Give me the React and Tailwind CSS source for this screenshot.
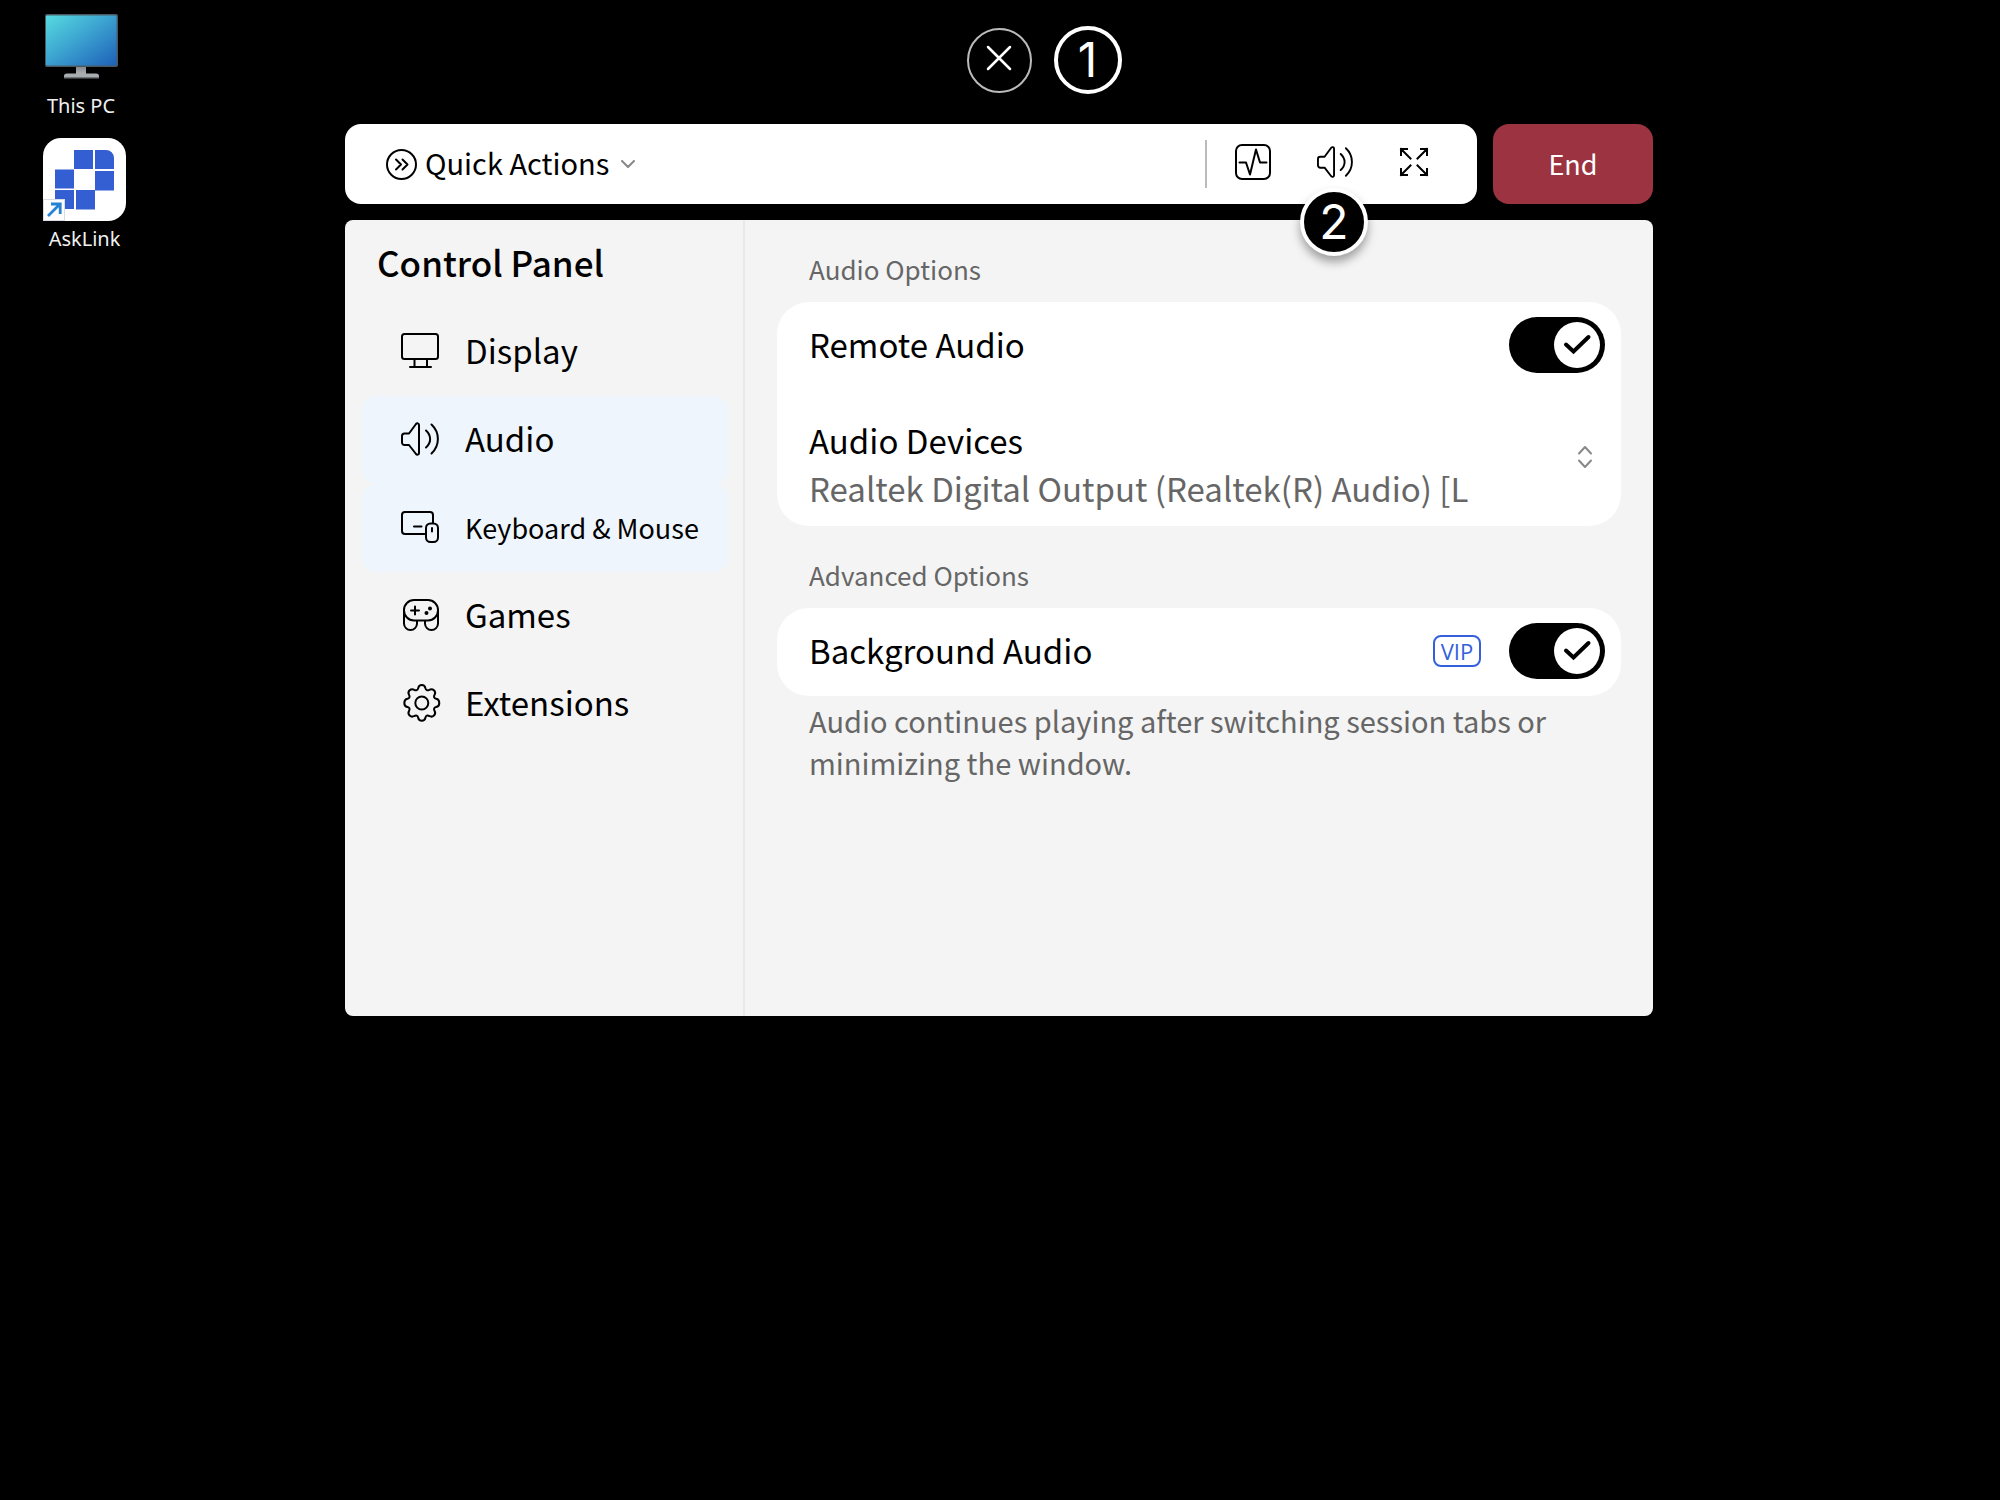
import React, { useState } from "react";

const stroke = {
  fill: "none",
  stroke: "currentColor",
  strokeWidth: 2,
  strokeLinecap: "round",
  strokeLinejoin: "round",
  "aria-hidden": true,
};

function SpeakerIcon({ className }) {
  return (
    <svg viewBox="0 0 38 36" className={className} {...stroke}>
      <path d="M8 12.500H3.500A2.500 2.500 0 0 0 1 15v6.500A2.500 2.500 0 0 0 3.500 24H8l7 9c1 1.200 3 .8 3-1V4c0-1.800-2-2.200-3-1z" />
      <path d="M25 9.500c5.500 5 5.500 12 0 17M30.500 3.500c8.500 8 8.500 21 0 29" />
    </svg>
  );
}

function DisplayIcon({ className }) {
  return (
    <svg viewBox="0 0 38 36" className={className} {...stroke}>
      <rect x="1" y="1" width="36" height="25" rx="2.500" />
      <path d="M13.500 26v8M26 26v8M9 34h21" />
    </svg>
  );
}

function KeyboardIcon({ className }) {
  return (
    <svg viewBox="0 0 38 36" className={className} {...stroke}>
      <path d="M23.500 25H4a3 3 0 0 1-3-3V6a3 3 0 0 1 3-3h25a3 3 0 0 1 3 3v8" />
      <rect x="25" y="14.500" width="12" height="18.500" rx="4.500" />
      <path d="M13 17.500h7.500M31 19v3.500" />
    </svg>
  );
}

function GamesIcon({ className }) {
  return (
    <svg viewBox="0 0 38 36" className={className} {...stroke}>
      <rect x="3" y="3" width="34" height="20.500" rx="10" />
      <path d="M3 13v13.500a6.500 6.500 0 0 0 13 0V24M37 13v13.500a6.500 6.500 0 0 1-13 0V24" />
      <path d="M10 13.500h8M14 9.500v8" />
      <circle cx="29" cy="11.500" r="1" fill="currentColor" />
      <circle cx="25.500" cy="16" r="1" fill="currentColor" />
    </svg>
  );
}

// eight rounded lobes around the hub
function ExtensionsIcon({ className }) {
  return (
    <svg viewBox="0 0 38 38" className={className} {...stroke}>
      <path d="M17.200 4.100C18 .1 23.600 .1 24.400 4.100c.5 2.200 2 2.700 3.900 1.700 3.400-2 7.200 1.700 5.300 5-1.200 2-.5 3.500 1.600 4 4.100.8 4.100 7.400 0 8.200-2.100.5-2.800 2-1.600 4 1.900 3.300-1.900 7-5.300 5-1.900-1-3.400-.5-3.900 1.700-.8 4-6.400 4-7.200 0-.5-2.200-2-2.700-3.900-1.700-3.400 2-7.200-1.700-5.300-5 1.200-2 .5-3.500-1.600-4-4.100-.8-4.100-7.400 0-8.200 2.100-.5 2.800-2 1.600-4-1.900-3.300 1.900-7 5.300-5 1.900 1 3.400.5 3.900-1.700z" />
      <circle cx="20.800" cy="19" r="6.500" />
    </svg>
  );
}

const menu = [
  { id: "display", label: "Display", Icon: DisplayIcon, size: "pb-[3px] text-[33px]" },
  { id: "audio", label: "Audio", Icon: SpeakerIcon, size: "pb-[3px] text-[33px]" },
  { id: "keyboard", label: "Keyboard & Mouse", Icon: KeyboardIcon, size: "text-[27px]" },
  { id: "games", label: "Games", Icon: GamesIcon, size: "pb-[3px] text-[33px]" },
  { id: "extensions", label: "Extensions", Icon: ExtensionsIcon, size: "pb-[3px] text-[33px]" },
];

function Switch({ id, checked, onChange }) {
  return (
    <span className="relative mb-0.5 flex shrink-0">
      <input
        id={id}
        type="checkbox"
        checked={checked}
        onChange={(e) => onChange(e.target.checked)}
        className="h-14 w-24 cursor-pointer appearance-none rounded-full bg-gray-400 checked:bg-black"
      />
      <span
        className={`pointer-events-none absolute top-[5px] flex size-[46px] items-center justify-center rounded-full bg-white ${
          checked ? "right-[5px]" : "left-[5px]"
        }`}
      >
        {checked && (
          <svg viewBox="0 0 46 46" className="size-[46px] text-black" {...stroke} strokeWidth="4" strokeLinejoin="miter">
            <path d="M12 22.500l7.500 7L34.500 15" />
          </svg>
        )}
      </span>
    </span>
  );
}

function Desktop() {
  return (
    <aside className="flex flex-col items-start pt-[14px] pl-[43px] font-['Noto_Sans',sans-serif] text-xl/6 text-[#f0f0f0]">
      <a href="#this-pc" className="flex w-[76px] flex-col items-center">
        <svg viewBox="0 0 74 66" className="h-[66px] w-[74px]" aria-hidden="true">
          <defs>
            <linearGradient id="screen" x1="0" y1="0" x2="1" y2="1">
              <stop offset="0" stopColor="#56dbe0" />
              <stop offset="0.500" stopColor="#3a9fcf" />
              <stop offset="1" stopColor="#1d60b8" />
            </linearGradient>
            <linearGradient id="stand" x1="0" y1="0" x2="0" y2="1">
              <stop offset="0" stopColor="#85888c" />
              <stop offset="1" stopColor="#b4b7bb" />
            </linearGradient>
          </defs>
          <rect x="1" y="0" width="73" height="53" rx="2" fill="#4b5a62" />
          <rect x="2" y="1.500" width="70.500" height="50" rx="1" fill="url(#screen)" />
          <rect x="32" y="53" width="10" height="8" fill="url(#stand)" />
          <path d="M20 62q0-2.500 3-2.500h29q3 0 3 2.500v2H20z" fill="#a9adb1" />
          <path d="M20 63h35v1.500H20z" fill="#6f7377" />
        </svg>
        <span className="mt-3.5">This PC</span>
      </a>
      <a href="#asklink" className="mt-5 flex flex-col items-center">
        <svg viewBox="0 0 83 83" className="size-[83px]" aria-hidden="true">
          <path d="M18 0h47a18 18 0 0 1 18 18v47a18 18 0 0 1-18 18H0V18A18 18 0 0 1 18 0z" fill="#fff" />
          <g fill="#345fd3">
            <path d="M31 12h19v19H31zM52 12h11a8 8 0 0 1 8 8v11H52z" />
            <path d="M12 31.500h19v19H12zM52 33h19v19.500H52z" />
            <path d="M12 52h19v19H12zM33 52h19v19.500H33z" />
          </g>
          <rect x="0.500" y="61.500" width="21" height="21" fill="#fdfdfd" stroke="#d8dce6" />
          <path d="M5 78l12-12M8 66h9.200v10" fill="none" stroke="#2583d6" strokeWidth="2.800" />
        </svg>
        <span className="mt-1.5">AskLink</span>
      </a>
    </aside>
  );
}

export default function App() {
  const [active, setActive] = useState(["audio", "keyboard"]);
  const [remoteAudio, setRemoteAudio] = useState(true);
  const [backgroundAudio, setBackgroundAudio] = useState(true);

  return (
    <div className="grid min-h-screen grid-cols-[345px_minmax(0,1fr)_347px] items-start bg-black font-['Noto_Sans_CJK_SC',sans-serif] text-black">
      <Desktop />

      <main>
        <div className="grid grid-cols-[1fr_auto_1fr] items-center gap-[22px] pt-[26px]">
          <button
            aria-label="Close"
            className="col-start-2 flex size-[65px] items-center justify-center rounded-full border-2 border-[#bbbbbb] text-white"
          >
            <svg viewBox="0 0 26 26" className="mb-1 size-[26px]" {...stroke} strokeWidth="2.500">
              <path d="M2 2l22 22M24 2L2 24" />
            </svg>
          </button>
          <span className="flex size-[68px] items-center justify-center rounded-full border-4 border-white font-['Inter',sans-serif] text-5xl text-white">
            1
          </span>
        </div>

        <div className="mt-[30px] flex h-20 gap-4">
          <div className="flex flex-1 items-center rounded-2xl bg-white pr-12 pl-10">
            <button className="flex items-center">
              <svg viewBox="0 0 32 32" className="size-8" {...stroke}>
                <circle cx="16.500" cy="16.500" r="14.500" />
                <path d="M11 11.500l5 5-5 5M17.500 11.500l5 5-5 5" />
              </svg>
              <span className="ml-2 pb-1 text-[29px]/[40px]">Quick Actions</span>
              <svg viewBox="0 0 14 8" className="ml-3 h-2 w-3.5 text-[#888888]" {...stroke}>
                <path d="M1 1l6 6 6-6" />
              </svg>
            </button>

            <div className="ml-auto h-12 border-l-2 border-[#bbbbbb]" />
            <div className="flex items-center gap-[46px] pb-1 pl-7">
              <button aria-label="Performance">
                <svg viewBox="0 0 36 36" className="size-9" {...stroke}>
                  <rect x="1" y="1" width="34" height="34" rx="6" />
                  <path d="M4.500 18.500H11l4 12 6-25 4 13h6.500" />
                </svg>
              </button>
              <div className="relative">
                <button aria-label="Audio" className="block">
                  <SpeakerIcon className="size-9" />
                </button>
                <span className="absolute top-11 -left-[17px] flex size-[68px] items-center justify-center rounded-full border-4 border-white bg-black font-['Inter',sans-serif] text-5xl text-white shadow-[0_6px_10px_rgba(0,0,0,0.35)]">
                  2
                </span>
              </div>
              <button aria-label="Full screen">
                <svg viewBox="0 0 30 30" className="size-[30px]" {...stroke} strokeLinecap="square" strokeLinejoin="miter">
                  <path d="M11.500 11.500L2 2M2 8V2h6M18.500 11.500L28 2M22 2h6v6M11.500 18.500L2 28M2 22v6h6M18.500 18.500L28 28M28 22v6h-6" />
                </svg>
              </button>
            </div>
          </div>
          <button className="w-40 rounded-2xl bg-[#9b3440] text-[27px]/[40px] text-white">End</button>
        </div>

        <div className="mt-4 flex min-h-[796px] overflow-hidden rounded-lg bg-[#f4f4f4]">
          <div className="w-[400px] shrink-0 border-r-2 border-[#e9e9e9] pr-3.5 pl-4">
            <h1 className="px-4 pt-[18px] pb-[22px] text-[35px]/[48px] font-medium">Control Panel</h1>
            <nav className="flex flex-col">
              {menu.map(({ id, label, Icon, size }) => (
                <button
                  key={id}
                  onClick={() => setActive([id])}
                  className={`flex h-[88px] items-center rounded-2xl pl-10 text-left ${
                    active.includes(id) ? "bg-[#eef5fd]" : ""
                  }`}
                >
                  <Icon className="mb-0.5 size-[38px] shrink-0 overflow-visible" />
                  <span className={`ml-[26px] whitespace-nowrap ${size}`}>{label}</span>
                </button>
              ))}
            </nav>
          </div>

          <div className="min-w-0 flex-1 px-8">
            <h2 className="px-8 pt-[29px] pb-[13px] text-[26px]/[40px] text-[#666666]">Audio Options</h2>
            <div className="rounded-[32px] bg-white pr-4 pl-8">
              <div className="flex h-[88px] items-center justify-between">
                <label htmlFor="remote" className="pb-1 text-[33px]/[48px]">
                  Remote Audio
                </label>
                <Switch id="remote" checked={remoteAudio} onChange={setRemoteAudio} />
              </div>
              <div className="flex h-[136px] items-start">
                <div className="flex min-w-0 flex-1 flex-col pt-[26px]">
                  <label htmlFor="devices" className="text-[33px]/[48px]">
                    Audio Devices
                  </label>
                  <select id="devices" className="h-12 appearance-none text-[33px]/[48px] text-[#666666]">
                    <option>Realtek Digital Output (Realtek(R) Audio) [L</option>
                  </select>
                </div>
                <svg viewBox="0 0 16 24" className="mt-[55px] mr-3 h-6 w-4 shrink-0 text-[#888888]" {...stroke}>
                  <path d="M2 8.500L8 2l6 6.500M2 15.500L8 22l6-6.500" />
                </svg>
              </div>
            </div>

            <h2 className="px-8 pt-[29px] pb-[13px] text-[26px]/[40px] text-[#666666]">Advanced Options</h2>
            <div className="flex h-[88px] items-center rounded-[32px] bg-white pr-4 pl-8">
              <label htmlFor="background" className="pb-1 text-[33px]/[48px]">
                Background Audio
              </label>
              <span className="mr-7 mb-0.5 ml-auto flex h-8 w-12 items-center justify-center rounded-lg border-2 border-[#3460dc] font-['Open_Sans',sans-serif] text-[22px]/[28px] font-medium text-[#3460dc]">
                VIP
              </span>
              <Switch id="background" checked={backgroundAudio} onChange={setBackgroundAudio} />
            </div>
            <p className="mt-[3px] px-8 text-[29px]/[42px] text-[#666666]">
              Audio continues playing after switching session tabs or minimizing the window.
            </p>
          </div>
        </div>
      </main>
    </div>
  );
}
